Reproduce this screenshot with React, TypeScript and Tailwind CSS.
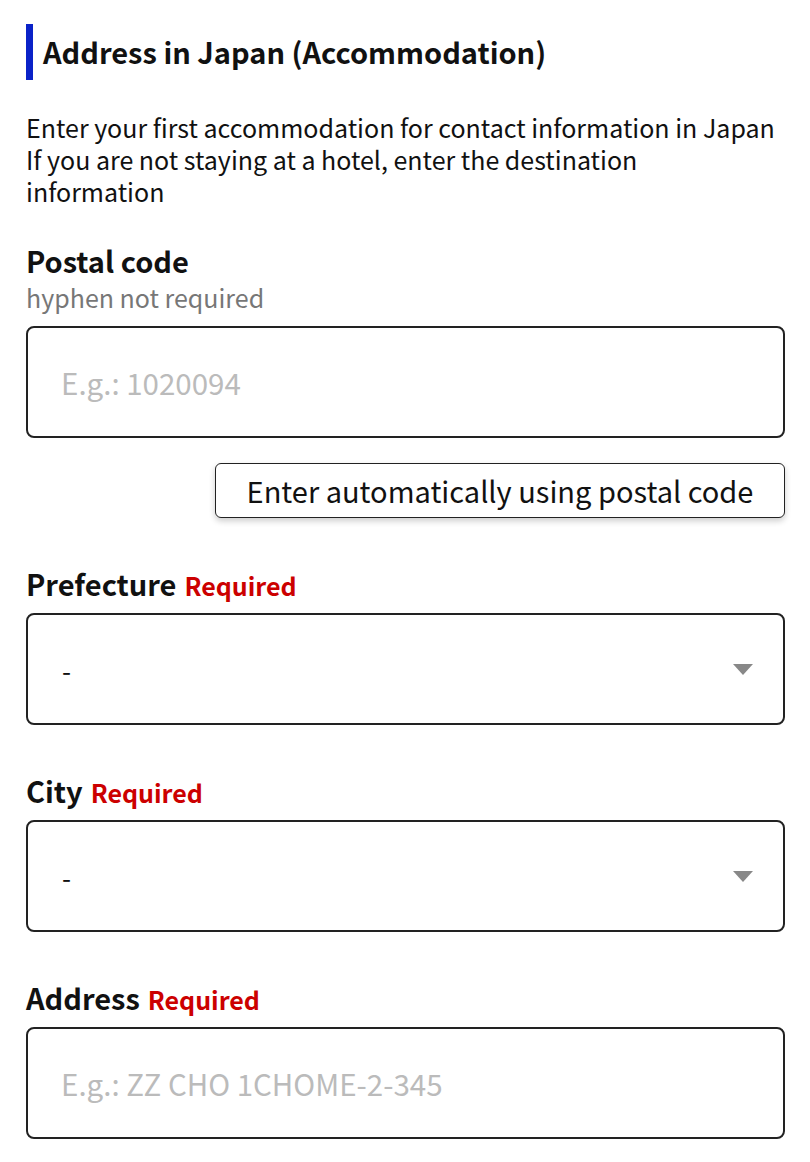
const fontStack = "font-['Noto_Sans_CJK_KR','Noto_Sans',sans-serif]";

function Label({ text, required }: { text: string; required?: boolean }) {
  return (
    <div className="flex items-baseline gap-[8px] h-[40px]">
      <span className="text-[29px] font-bold text-[#111] leading-[40px]">{text}</span>
      {required && <span className="text-[25px] font-bold text-[#cc0000] leading-[40px]">Required</span>}
    </div>
  );
}

function SelectBox() {
  return (
    <div className="h-[112px] border-2 border-[#222] rounded-[8px] flex items-center justify-between pl-[34px] pr-[30px]">
      <span className="text-[26px] text-[#111]">-</span>
      <svg width="20" height="11" viewBox="0 0 20 11">
        <path d="M0 0 H20 L10 11 Z" fill="#888" />
      </svg>
    </div>
  );
}

function InputBox({ placeholder }: { placeholder: string }) {
  return (
    <div className="h-[112px] border-2 border-[#222] rounded-[8px] flex items-center pl-[33px]">
      <span className="text-[29.5px] text-[#bbb]">{placeholder}</span>
    </div>
  );
}

export default function App() {
  return (
    <div className={`${fontStack} bg-white w-[810px] min-h-[1162px] pl-[26px] pr-[25px] pt-[24px]`}>
      <div className="flex items-center h-[56px]">
        <div className="w-[7px] h-[56px] bg-[#0a22c8]" />
        <h1 className="ml-[10px] text-[29px] font-bold text-[#111]">Address in Japan (Accommodation)</h1>
      </div>

      <div className="mt-[31px] text-[25px] leading-[32px] text-[#111]">
        <p className="whitespace-nowrap">Enter your first accommodation for contact information in Japan</p>
        <p className="whitespace-nowrap">If you are not staying at a hotel, enter the destination</p>
        <p>information</p>
      </div>

      <div className="mt-[33px]">
        <Label text="Postal code" />
        <div className="text-[25px] leading-[34px] text-[#777]">hyphen not required</div>
        <div className="mt-[12px]">
          <InputBox placeholder="E.g.: 1020094" />
        </div>
        <div className="flex justify-end mt-[25px]">
          <button className="w-[570px] h-[55px] border-[1.5px] border-[#222] rounded-[6px] bg-white shadow-[0_3px_6px_rgba(0,0,0,0.2)] text-[29px] text-[#111]">
            Enter automatically using postal code
          </button>
        </div>
      </div>

      <div className="mt-[45px]">
        <Label text="Prefecture" required />
        <div className="mt-[10px]">
          <SelectBox />
        </div>
      </div>

      <div className="mt-[45px]">
        <Label text="City" required />
        <div className="mt-[10px]">
          <SelectBox />
        </div>
      </div>

      <div className="mt-[45px]">
        <Label text="Address" required />
        <div className="mt-[10px]">
          <InputBox placeholder="E.g.: ZZ CHO 1CHOME-2-345" />
        </div>
      </div>
    </div>
  );
}
